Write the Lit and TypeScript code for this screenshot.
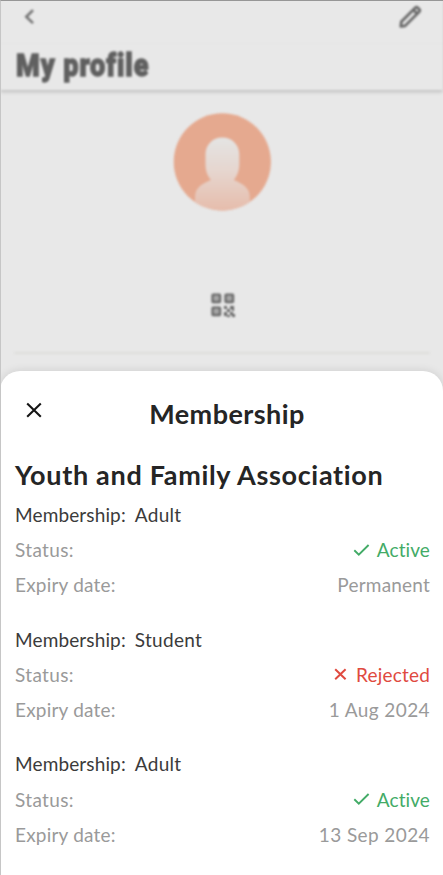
import { LitElement, html, css, svg } from "lit";
import { customElement } from "lit/decorators.js";

interface Membership {
  kind: string;
  active: boolean;
  expiry: string;
}

const memberships: Membership[] = [
  { kind: "Adult", active: true, expiry: "Permanent" },
  { kind: "Student", active: false, expiry: "1 Aug 2024" },
  { kind: "Adult", active: true, expiry: "13 Sep 2024" },
];

const finder = (x: number, y: number) =>
  svg`<rect x=${x + 1.4} y=${y + 1.4} width="7.4" height="7.4" rx="0.6" fill="#b4b4b4" stroke="#686868" stroke-width="2.4"/>
      <rect x=${x + 3.8} y=${y + 3.8} width="2.6" height="2.6" fill="#9c9c9c"/>`;

@customElement("profile-page")
export class ProfilePage extends LitElement {
  static styles = css`
    :host { display: block; height: 100%; filter: blur(1px); color: #606060; }
    .head { box-sizing: border-box; height: 90px; box-shadow: 0 1px 4px rgba(0, 0, 0, 0.27); background: #e8e8e8; }
    .bar { display: flex; justify-content: space-between; height: 44px; box-sizing: border-box; padding: 4px 20px 0 16px; border-bottom: 1px solid #e4e4e4; }
    .title { margin: 0; padding: 0 0 0 16px; font: 900 32px/42px Roboto, sans-serif; letter-spacing: 1.1px; transform: scaleX(0.845); transform-origin: 16px 0; -webkit-text-stroke: 1.3px #606060; white-space: nowrap; width: 200px; }
    .body { display: flex; flex-direction: column; align-items: center; padding: 23px 13px 0 14px; }
    .avatar { display: block; width: 98px; height: 98px; }
    .qr { display: block; width: 26px; height: 26px; margin: 81px 0 0 1px; }
    .rule { align-self: stretch; height: 2px; margin-top: 34px; background: #dfdfdc; }
    svg { display: block; }
  `;

  render() {
    return html`
      <div class="head">
        <div class="bar">
          <svg width="26" height="26" viewBox="0 0 26 26" fill="none" stroke="#707070" stroke-width="2.5"><path d="M17 6.2 10.3 12.8 17 19.2"/></svg>
          <svg width="26" height="26" viewBox="0 0 26 26" fill="none" stroke="#686868" stroke-width="2.7" stroke-linejoin="round">
            <path d="M3.8 22.3 4.3 17.8 18.3 3.8Q19.5 2.6 20.7 3.8L22.2 5.3Q23.4 6.5 22.2 7.7L8.1 21.9ZM16.3 5.8 20.2 9.7"/>
          </svg>
        </div>
        <h1 class="title">My profile</h1>
      </div>
      <div class="body">
        <svg class="avatar" viewBox="0 0 98 98">
          <defs>
            <linearGradient id="person" gradientUnits="userSpaceOnUse" x1="0" y1="25" x2="0" y2="98">
              <stop stop-color="#e4e4e3"/><stop offset="0.45" stop-color="#e6d6cf"/><stop offset="1" stop-color="#e6bcab"/>
            </linearGradient>
            <clipPath id="disc"><circle cx="49.3" cy="48.9" r="48.6"/></clipPath>
          </defs>
          <circle cx="49.3" cy="48.9" r="48.6" fill="#e5a98f"/>
          <path clip-path="url(#disc)" fill="url(#person)" d="M49.3 24.5C39.5 24.5 32.5 32 32.5 41.5V51C32.5 58 34.5 63 38 67C30 70.5 22 74 22 84V98H76.8V84C76.8 74 68.5 70.5 60.8 67C64 63 66.3 58 66.3 51V41.5C66.3 32 59.2 24.5 49.3 24.5Z"/>
        </svg>
        <svg class="qr" viewBox="0 0 26 26">
          ${finder(1.2, 1.2)}${finder(14.2, 1.2)}${finder(1.2, 14.2)}
          <path fill="#666" d="M14 14h3v3h-3zM17 17h3v3h-3zM20 14h4v3h-4zM14 20h3v4h-3zM20 20h3v2h2v3h-3v-2h-2zM22 17h2v2h-2zM17 23h3v2h-3z"/>
        </svg>
        <div class="rule"></div>
      </div>
    `;
  }
}

@customElement("membership-card")
export class MembershipCard extends LitElement {
  static properties = { item: { attribute: false } };
  declare item: Membership;

  static styles = css`
    :host { display: block; height: 124.7px; color: #9a9a9a; }
    .row { display: flex; height: 35.1px; line-height: 35px; justify-content: space-between; align-items: center; white-space: pre; }
    .kind { justify-content: flex-start; gap: 9px; color: #3b3b3b; letter-spacing: 0.13px; }
    .value { letter-spacing: 0.3px; }
    .label { letter-spacing: 0.35px; }
    .status { display: flex; align-items: center; gap: 7px; letter-spacing: 0.1px; }
    .rejected { color: #e04a3f; gap: 8px; letter-spacing: 0.2px; }
    .date { letter-spacing: 0.4px; }
    .active { color: #43ab67; }
    svg { display: block; }
  `;

  render() {
    const m = this.item;
    const dated = /\d/.test(m.expiry);
    return html`
      <div class="row kind"><span>Membership:</span><span class="value">${m.kind}</span></div>
      <div class="row">
        <span class="label">Status:</span>
        ${m.active
          ? html`<span class="status active">
              <svg width="17" height="14" viewBox="0 0 17 14" fill="none" stroke="currentColor" stroke-width="1.9"><path d="M1.3 7.3 5.8 11.6 15.6 2"/></svg><span>Active</span></span>`
          : html`<span class="status rejected">
              <svg width="14" height="14" viewBox="0 0 14 14" fill="none" stroke="currentColor" stroke-width="2"><path d="M1.2 2.2 11.6 12.2M11.6 2.2 1.2 12.2"/></svg><span>Rejected</span></span>`}
      </div>
      <div class="row"><span>Expiry date:</span><span class=${dated ? "date" : ""}>${m.expiry}</span></div>
    `;
  }
}

@customElement("app-root")
export class AppRoot extends LitElement {
  static styles = css`
    :host { display: block; position: relative; width: 443px; height: 875px; overflow: hidden; background: #e8e8e8; font: 400 19px Lato, "Noto Sans", sans-serif; letter-spacing: 0.2px; }
    .page { height: 371px; }
    .sheet { position: relative; box-sizing: border-box; height: 504px; padding: 0 13px 0 15px; background: #fff; border-radius: 20px 20px 0 0; box-shadow: 0 0 10px rgba(0, 0, 0, 0.12); color: #252525; }
    .top { display: grid; grid-template-columns: 38px 1fr 29px; height: 86px; align-items: center; }
    .top svg { display: block; margin: -8px 0 0 10px; }
    h2, h3 { margin: 0; font-size: 27px; font-weight: 700; white-space: nowrap; }
    h2 { text-align: center; line-height: 86px; letter-spacing: 0.45px; }
    h3 { line-height: 36px; height: 40px; letter-spacing: 0.68px; }
    .frame { position: absolute; inset: 0; border-top: 1px solid #969696; border-left: 1px solid #c6c6c6; pointer-events: none; }
  `;

  render() {
    return html`
      <profile-page class="page"></profile-page>
      <div class="sheet">
        <div class="top">
          <svg width="18" height="18" viewBox="0 0 18 18" fill="none" stroke="#151515" stroke-width="2.1"><path d="M2.2 2.5 15.8 15.7M15.8 2.5 2.2 15.7"/></svg>
          <h2>Membership</h2>
        </div>
        <h3>Youth and Family Association</h3>
        ${memberships.map((m) => html`<membership-card .item=${m}></membership-card>`)}
      </div>
      <div class="frame"></div>
    `;
  }
}
